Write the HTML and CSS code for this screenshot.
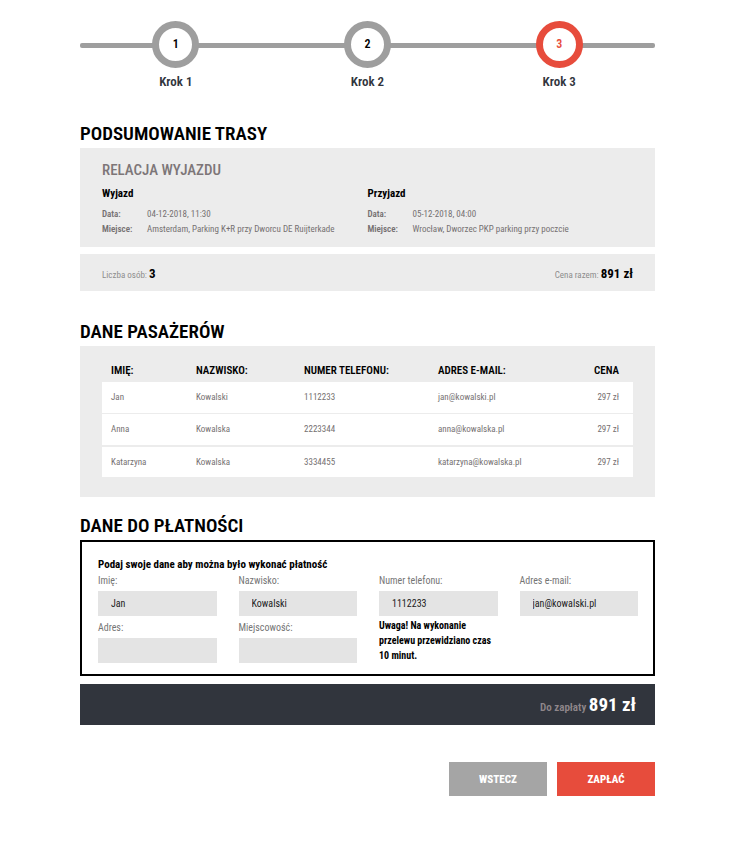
FILE: index.html
```html
<!DOCTYPE html>
<html lang="pl">
<head>
<meta charset="utf-8">
<meta name="viewport" content="width=device-width, initial-scale=1">
<title>Podsumowanie trasy</title>
<link rel="stylesheet" href="styles.css">
</head>
<body>
<main class="page">
  <ol class="steps">
    <li class="step"><span class="step-dot">1</span><span class="step-label">Krok 1</span></li>
    <li class="step"><span class="step-dot">2</span><span class="step-label">Krok 2</span></li>
    <li class="step step-active"><span class="step-dot">3</span><span class="step-label">Krok 3</span></li>
  </ol>

  <section class="section">
    <h1 class="title">PODSUMOWANIE TRASY</h1>
    <div class="panel route">
      <h2 class="route-title">RELACJA WYJAZDU</h2>
      <div class="route-cols">
        <div>
          <h3 class="subtitle">Wyjazd</h3>
          <dl class="facts">
            <dt>Data:</dt><dd>04-12-2018, 11:30</dd>
            <dt>Miejsce:</dt><dd>Amsterdam, Parking K+R przy Dworcu DE Ruijterkade</dd>
          </dl>
        </div>
        <div>
          <h3 class="subtitle">Przyjazd</h3>
          <dl class="facts">
            <dt>Data:</dt><dd>05-12-2018, 04:00</dd>
            <dt>Miejsce:</dt><dd>Wrocław, Dworzec PKP parking przy poczcie</dd>
          </dl>
        </div>
      </div>
    </div>
    <div class="panel totals">
      <span>Liczba osób: <strong>3</strong></span>
      <span>Cena razem: <strong>891 zł</strong></span>
    </div>
  </section>

  <section class="section">
    <h1 class="title">DANE PASAŻERÓW</h1>
    <div class="panel passengers">
      <table class="people">
        <colgroup><col class="c-first"><col class="c-last"><col class="c-phone"><col class="c-mail"><col></colgroup>
        <thead>
          <tr><th>IMIĘ:</th><th>NAZWISKO:</th><th>NUMER TELEFONU:</th><th>ADRES E-MAIL:</th><th>CENA</th></tr>
        </thead>
        <tbody>
          <tr><td>Jan</td><td>Kowalski</td><td>1112233</td><td>jan@kowalski.pl</td><td>297 zł</td></tr>
          <tr><td>Anna</td><td>Kowalska</td><td>2223344</td><td>anna@kowalska.pl</td><td>297 zł</td></tr>
          <tr><td>Katarzyna</td><td>Kowalska</td><td>3334455</td><td>katarzyna@kowalska.pl</td><td>297 zł</td></tr>
        </tbody>
      </table>
    </div>
  </section>

  <form class="section payment">
    <h1 class="title">DANE DO PŁATNOŚCI</h1>
    <div class="pay-box">
      <h3 class="subtitle">Podaj swoje dane aby można było wykonać płatność</h3>
      <div class="fields">
        <div class="field"><label for="first">Imię:</label><input id="first" type="text" value="Jan"></div>
        <div class="field"><label for="last">Nazwisko:</label><input id="last" type="text" value="Kowalski"></div>
        <div class="field"><label for="phone">Numer telefonu:</label><input id="phone" type="tel" value="1112233"></div>
        <div class="field"><label for="mail">Adres e-mail:</label><input id="mail" type="email" value="jan@kowalski.pl"></div>
        <div class="field"><label for="address">Adres:</label><input id="address" type="text"></div>
        <div class="field"><label for="city">Miejscowość:</label><input id="city" type="text"></div>
        <p class="notice">Uwaga! Na wykonanie przelewu przewidziano czas 10 minut.</p>
      </div>
    </div>
    <div class="due">Do zapłaty <strong>891 zł</strong></div>
    <div class="actions">
      <button type="button" class="btn btn-back">WSTECZ</button>
      <button type="submit" class="btn btn-pay">ZAPŁAĆ</button>
    </div>
  </form>
</main>
</body>
</html>
```
FILE: styles.css
```css
* { box-sizing: border-box; }

body {
  margin: 0;
  background: #fff;
  color: #000;
  font-family: "Roboto Condensed", "Liberation Sans Narrow", Roboto, sans-serif;
  font-size: 10px;
  line-height: 15px;
}

h1, h2, h3, p, dl, dd, ol { margin: 0; padding: 0; }

.page { padding: 21px 84px 55px 80px; }

.steps {
  position: relative;
  display: grid;
  grid-template-columns: repeat(3, 1fr);
  list-style: none;
}
.steps::before {
  content: "";
  position: absolute;
  top: 22px;
  left: 0;
  right: 0;
  height: 5px;
  border-radius: 2px;
  background: #9e9e9e;
}
.step { position: relative; display: flex; flex-direction: column; align-items: center; gap: 6px; }
.step-dot {
  display: flex;
  align-items: center;
  justify-content: center;
  width: 47px;
  height: 47px;
  border: 7px solid #9e9e9e;
  border-radius: 50%;
  background: #fff;
  font-size: 12px;
  font-weight: 600;
}
.step-label { color: #31353d; font-size: 13px; font-weight: 600; line-height: 16px; }
.step-active .step-dot { border-color: #e74c3c; color: #e74c3c; }

.section { margin-top: 28px; }
.steps + .section { margin-top: 31px; }
.section.payment { margin-top: 16px; }

.title { margin-bottom: 1px; font-size: 19px; font-weight: 600; line-height: 26px; }
.panel { background: #ececec; padding: 0 22px; }

.route { padding-top: 13px; padding-bottom: 10px; }
.route-title { color: #7d7678; font-size: 15px; font-weight: 500; line-height: 18px; }
.route-cols { display: grid; grid-template-columns: 1fr 1fr; margin-top: 7px; }
.subtitle { font-size: 11px; font-weight: 700; line-height: 16px; }
.facts {
  display: grid;
  grid-template-columns: 45px 1fr;
  margin-top: 5px;
  color: #757071;
  font-size: 9px;
  white-space: nowrap;
}
.facts dt { font-weight: 600; }

.totals {
  display: flex;
  justify-content: space-between;
  margin-top: 7px;
  padding-top: 11px;
  padding-bottom: 7px;
  color: #8c8c8c;
  font-size: 9px;
  line-height: 18px;
}
.totals strong { color: #000; font-size: 13px; font-weight: 700; }

.passengers { padding-top: 13px; padding-bottom: 20px; }
.people { width: 100%; border-collapse: separate; border-spacing: 0; table-layout: fixed; }
.people th, .people td { padding: 0 0 0 9px; text-align: left; white-space: nowrap; }
.people th { height: 23px; font-size: 11px; font-weight: 600; }
.people td { height: 32px; background: #fff; color: #757071; border-bottom: 1px solid #ececec; font-size: 9px; }
.people tr:nth-child(2) td { height: 33px; border-bottom-width: 2px; }
.people tr:last-child td { height: 30px; border-bottom: 0; }
.people tr > :last-child { padding: 0 14px 0 0; text-align: right; }
.c-first { width: 85px; }
.c-last { width: 108px; }
.c-phone { width: 134px; }
.c-mail { width: 130px; }

.pay-box { border: 2px solid #000; padding: 17px 15px 11px 16px; }
.pay-box .subtitle { line-height: 12px; }
.fields { display: grid; grid-template-columns: repeat(4, 1fr); gap: 2px 22px; }
.field label { display: block; line-height: 20px; color: #757575; }
.field input {
  display: block;
  width: 100%;
  height: 25px;
  padding: 0 13px;
  border: 0;
  background: #e4e4e4;
  color: #222;
  font: inherit;
}
.notice { font-weight: 700; }

.due {
  margin-top: 8px;
  padding: 9px 19px 5px;
  background: #31353d;
  color: #8f878b;
  font-size: 11px;
  font-weight: 600;
  line-height: 24px;
  text-align: right;
}
.due strong { color: #fff; font-size: 19px; font-weight: 700; }

.actions { display: flex; justify-content: flex-end; gap: 10px; margin-top: 37px; }
.btn {
  width: 98px;
  height: 34px;
  padding: 0;
  border: 0;
  color: #fff;
  font: inherit;
  font-size: 11px;
  font-weight: 800;
}
.btn-back { background: #a5a5a5; }
.btn-pay { background: #e74c3c; }
```
